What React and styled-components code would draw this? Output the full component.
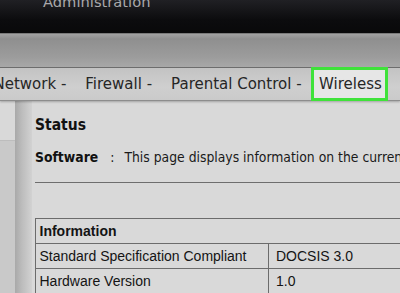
import React from 'react'
import styled, { createGlobalStyle } from 'styled-components'

const GlobalStyle = createGlobalStyle`
  html, body {
    margin: 0;
    padding: 0;
    background: #d9d9d9;
  }
`

const Page = styled.div`
  width: 400px;
  height: 293px;
  overflow: hidden;
  display: flex;
  flex-direction: column;
  background: #d9d9d9;
`

const TopBar = styled.div`
  height: 33px;
  flex-shrink: 0;
  background: linear-gradient(#202024, #0c0c0e 60%, #09090a);
  border-bottom: 1px solid #7a7a7a;
  overflow: hidden;
`

const Title = styled.div`
  margin: -7px 0 0 43px;
  font-family: "DejaVu Sans", Verdana, sans-serif;
  font-size: 14.7px;
  line-height: 17px;
  color: #a9a9ab;
`

const Band = styled.div`
  height: 33px;
  flex-shrink: 0;
  background: linear-gradient(#a2a2a2, #8f8f8f 15%, #9c9c9c 70%, #a8a8a8);
  border-bottom: 1px solid #6f6f6f;
`

const NavBar = styled.div`
  height: 32px;
  flex-shrink: 0;
  display: flex;
  align-items: stretch;
  background: linear-gradient(#c3c3c3, #cfcfcf 60%, #cacaca);
  border-bottom: 1px solid #8d8d8d;
  box-shadow: 0 1px 2px rgba(0, 0, 0, 0.25);
  position: relative;
  z-index: 1;
`

const NavList = styled.div`
  display: flex;
  align-items: stretch;
  margin-left: -16px;
  white-space: nowrap;
`

const NavItem = styled.div`
  display: flex;
  align-items: center;
  padding: ${p => (p.$active ? '0 3px 0 5px' : '0 9.5px')};
  font-family: "DejaVu Sans", Verdana, sans-serif;
  font-size: 15px;
  color: #262626;
  background: ${p => (p.$active ? '#e6e6e6' : 'transparent')};
  border: ${p => (p.$active ? '3px solid #3fe23a' : 'none')};
  margin-top: ${p => (p.$active ? '-1px' : '0')};
  margin-bottom: ${p => (p.$active ? '-1px' : '0')};
`

const Body = styled.div`
  flex: 1;
  display: flex;
  min-height: 0;
`

const Sidebar = styled.div`
  width: 15px;
  flex-shrink: 0;
  background: #c9c9c9;
  display: flex;
  flex-direction: column;
`

const SideTop = styled.div`
  height: 39px;
  background: #d9d9d9;
  border-bottom: 1px solid #bdbdbd;
`

const Shade = styled.div`
  width: 17px;
  flex-shrink: 0;
  background: linear-gradient(90deg, #a9a9a9, #bcbcbc 40%, #d2d2d2);
`

const Content = styled.div`
  flex: 1;
  padding: 14.5px 0 0 3px;
  min-width: 0;
  background: #d9d9d9;
`

const Heading = styled.div`
  font-family: "DejaVu Sans Condensed", "DejaVu Sans", Verdana, sans-serif;
  font-weight: bold;
  font-size: 15.5px;
  line-height: 18px;
  color: #111;
`

const Desc = styled.div`
  margin-top: 15px;
  display: flex;
  white-space: nowrap;
  font-family: "DejaVu Sans Condensed", "DejaVu Sans", Verdana, sans-serif;
  font-size: 13.8px;
  line-height: 16px;
  color: #1a1a1a;
`

const Label = styled.span`
  font-weight: bold;
  color: #111;
`

const Colon = styled.span`
  margin: 0 10px 0 12px;
`

const Rule = styled.div`
  margin-top: 17px;
  height: 1px;
  background: #6e6e6e;
`

const Table = styled.div`
  margin-top: 35px;
  width: 420px;
  border-top: 1px solid #6c6c6c;
  border-left: 1px solid #6c6c6c;
  font-family: "Liberation Sans", Arial, sans-serif;
  font-size: 14px;
  color: #141414;
`

const Row = styled.div`
  display: flex;
  height: 24px;
  border-bottom: 1px solid #6c6c6c;
`

const Cell = styled.div`
  display: flex;
  align-items: center;
  padding-left: ${p => (p.$second ? '7px' : '3.5px')};
  width: ${p => (p.$full ? '100%' : p.$second ? 'auto' : '232px')};
  flex: ${p => (p.$second ? '1' : 'none')};
  border-left: ${p => (p.$second ? '1px solid #6c6c6c' : 'none')};
  font-weight: ${p => (p.$head ? 'bold' : 'normal')};
  box-sizing: border-box;
`

const rows = [
  ['Standard Specification Compliant', 'DOCSIS 3.0'],
  ['Hardware Version', '1.0'],
]

const navItems = ['Network -', 'Firewall -', 'Parental Control -']

export default function App() {
  return (
    <>
      <GlobalStyle />
      <Page>
        <TopBar>
          <Title>Administration</Title>
        </TopBar>
        <Band />
        <NavBar>
          <NavList>
            {navItems.map(item => (
              <NavItem key={item}>{item}</NavItem>
            ))}
            <NavItem $active>Wireless</NavItem>
          </NavList>
        </NavBar>
        <Body>
          <Sidebar>
            <SideTop />
          </Sidebar>
          <Shade />
          <Content>
            <Heading>Status</Heading>
            <Desc>
              <Label>Software</Label>
              <Colon>:</Colon>
              <span>This page displays information on the current status of the modem.</span>
            </Desc>
            <Rule />
            <Table>
              <Row>
                <Cell $full $head>Information</Cell>
              </Row>
              {rows.map(([k, v]) => (
                <Row key={k}>
                  <Cell>{k}</Cell>
                  <Cell $second>{v}</Cell>
                </Row>
              ))}
            </Table>
          </Content>
        </Body>
      </Page>
    </>
  )
}
